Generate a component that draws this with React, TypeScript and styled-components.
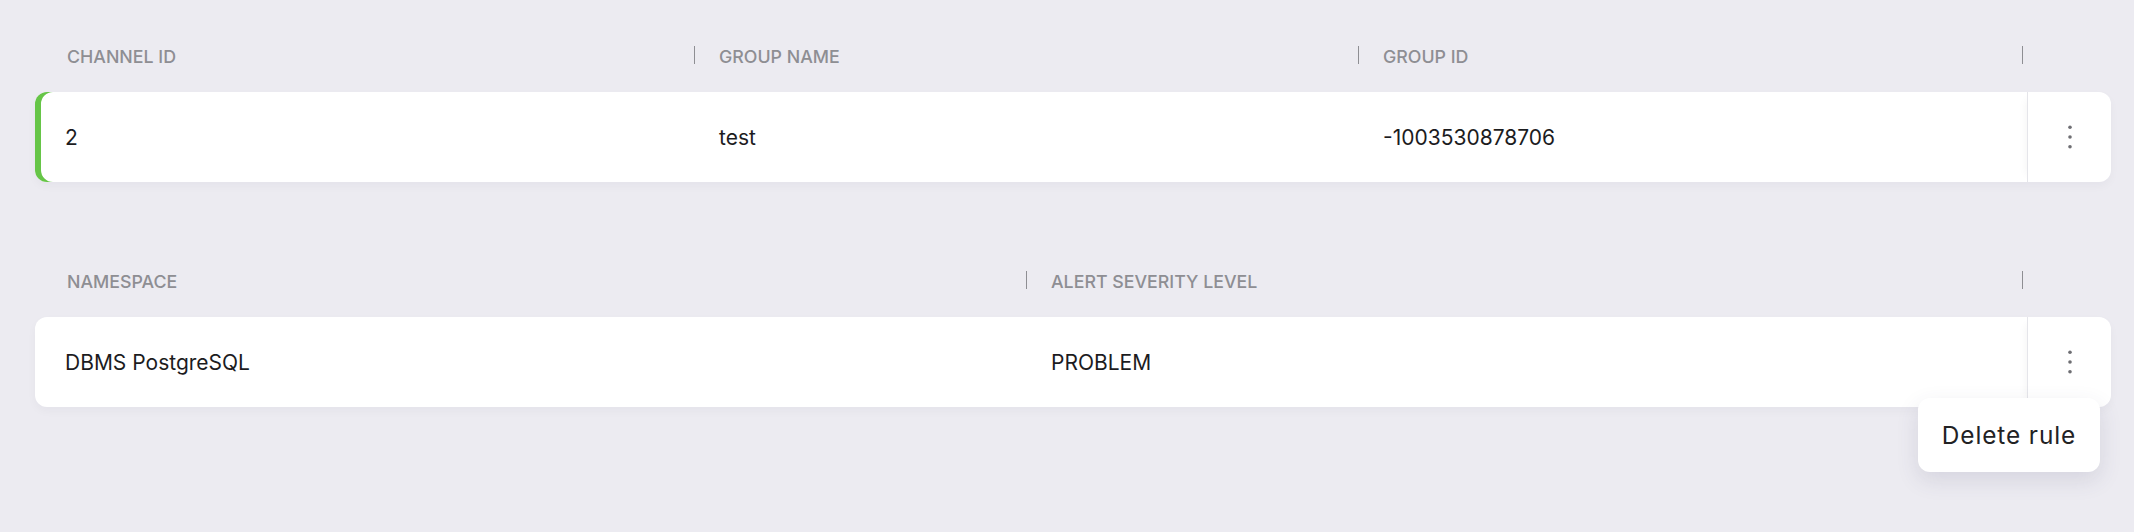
import React from 'react';
import styled, {createGlobalStyle} from 'styled-components';

const GlobalStyle = createGlobalStyle`
  html, body {
    margin: 0;
    padding: 0;
    background: #ecebf1;
  }
  body {
    font-family: Inter, "Noto Sans", "Liberation Sans", sans-serif;
    color: #1c1c1e;
  }
`;

const Page = styled.div`
  box-sizing: border-box;
  min-height: 100vh;
  padding: 28px 23px 0 35px;
  display: flex;
  flex-direction: column;
  gap: 71px;
  background: #ecebf1;
`;

const Table = styled.div`
  display: flex;
  flex-direction: column;
  gap: 8px;
`;

interface ColsProps {
  cols: number;
}

const HeaderRow = styled.div<ColsProps>`
  display: grid;
  grid-template-columns: repeat(${p => p.cols}, 1fr) 84px;
  height: 56px;
  align-items: center;
`;

const HeaderCell = styled.div`
  position: relative;
  height: 100%;
  display: flex;
  align-items: center;
  padding-left: 20px;
  font-size: 17.8px;
  font-weight: 500;
  color: #8e8e93;
  text-transform: uppercase;
  &:first-child {
    padding-left: 32px;
  }
  &::after {
    content: '';
    position: absolute;
    right: 4px;
    top: 18px;
    width: 1px;
    height: 18px;
    background: #8e8e93;
  }
`;

interface CardProps extends ColsProps {
  $accent?: string;
}

const Card = styled.div<CardProps>`
  position: relative;
  display: grid;
  grid-template-columns: repeat(${p => p.cols}, 1fr) 84px;
  height: 90px;
  background: #fff;
  border-radius: 12px;
  box-shadow: ${p => (p.$accent ? `inset 6px 0 0 ${p.$accent}, ` : '')}0 4px 10px rgba(40, 40, 70, 0.035);
`;

const Cell = styled.div`
  display: flex;
  align-items: center;
  padding-left: 20px;
  font-size: 21px;
  color: #1c1c1e;
  &:first-child {
    padding-left: 30px;
  }
`;

const ActionCell = styled.div`
  position: relative;
  display: flex;
  align-items: center;
  justify-content: center;
  border-left: 1px solid #e5e5ea;
  box-shadow: -8px 0 10px -8px rgba(0, 0, 0, 0.06);
  border-radius: 0 12px 12px 0;
  cursor: pointer;
`;

const Menu = styled.div`
  position: absolute;
  right: 11px;
  top: 81px;
  width: 182px;
  height: 74px;
  box-sizing: border-box;
  display: flex;
  align-items: center;
  justify-content: center;
  background: #fff;
  border-radius: 12px;
  box-shadow: 0 8px 22px rgba(60, 60, 100, 0.13);
  font-size: 24.4px;
  letter-spacing: 0.9px;
  color: #222224;
  white-space: nowrap;
  z-index: 2;
`;

function Dots() {
  return (
    <svg width="8" height="28" viewBox="0 0 8 28">
      <circle cx="4" cy="4.3" r="1.8" fill="#6e6e73" />
      <circle cx="4" cy="14" r="1.8" fill="#6e6e73" />
      <circle cx="4" cy="23.7" r="1.8" fill="#6e6e73" />
    </svg>
  );
}

function App() {
  return (
    <>
      <GlobalStyle />
      <Page>
        <Table>
          <HeaderRow cols={3}>
            <HeaderCell>Channel ID</HeaderCell>
            <HeaderCell>Group name</HeaderCell>
            <HeaderCell>Group ID</HeaderCell>
          </HeaderRow>
          <Card cols={3} $accent="#66c547">
            <Cell>2</Cell>
            <Cell>test</Cell>
            <Cell>-1003530878706</Cell>
            <ActionCell>
              <Dots />
            </ActionCell>
          </Card>
        </Table>

        <Table>
          <HeaderRow cols={2}>
            <HeaderCell>Namespace</HeaderCell>
            <HeaderCell>Alert severity level</HeaderCell>
          </HeaderRow>
          <Card cols={2}>
            <Cell>DBMS PostgreSQL</Cell>
            <Cell>PROBLEM</Cell>
            <ActionCell>
              <Dots />
              <Menu>Delete rule</Menu>
            </ActionCell>
          </Card>
        </Table>
      </Page>
    </>
  );
}

export default App;
